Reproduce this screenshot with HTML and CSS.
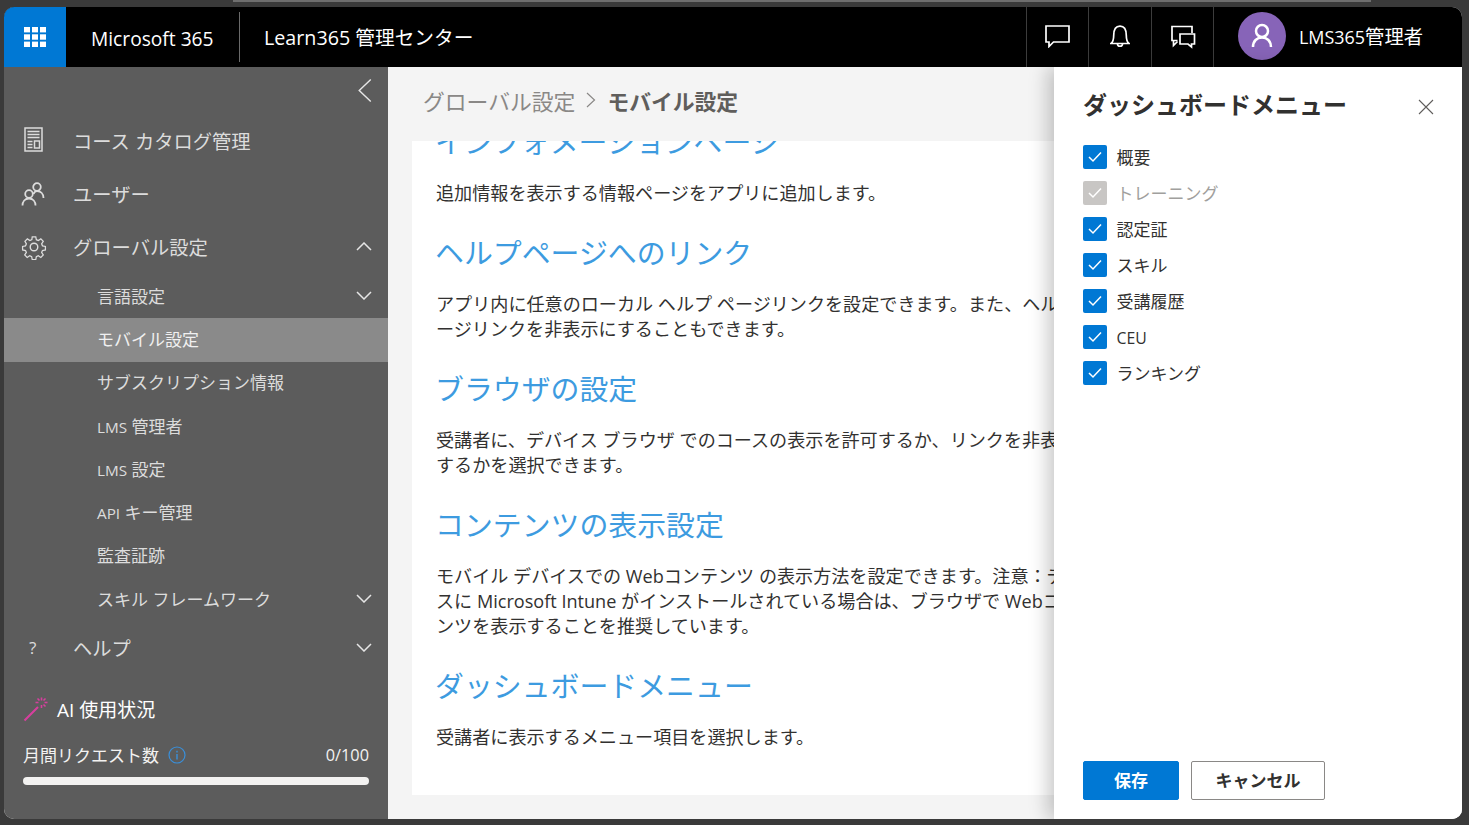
FILE: index.html
```html
<!DOCTYPE html>
<html lang="ja">
<head>
<meta charset="utf-8">
<title>Learn365 管理センター</title>
<link rel="stylesheet" href="styles.css">
</head>
<body>
<div class="topstrip"></div>
<div class="window">
  <header class="topbar">
    <div class="waffle">
      <svg width="22" height="20" viewBox="0 0 22 20" fill="#fff"><rect x="0" y="0" width="6" height="5.4"/><rect x="8" y="0" width="6" height="5.4"/><rect x="16" y="0" width="6" height="5.4"/><rect x="0" y="7.3" width="6" height="5.4"/><rect x="8" y="7.3" width="6" height="5.4"/><rect x="16" y="7.3" width="6" height="5.4"/><rect x="0" y="14.6" width="6" height="5.4"/><rect x="8" y="14.6" width="6" height="5.4"/><rect x="16" y="14.6" width="6" height="5.4"/></svg>
    </div>
    <div class="brand">Microsoft 365</div>
    <div class="app-name">Learn365 管理センター</div>
    <div class="top-actions">
      <div class="top-btn"><svg width="25" height="23" viewBox="0 0 25 23" fill="none" stroke="#fff" stroke-width="1.7"><path d="M1 1h23v16H8.500L4 21.500V17H1z"/></svg></div>
      <div class="top-btn"><svg width="20" height="23" viewBox="0 0 20 23" fill="none" stroke="#fff" stroke-width="1.7"><path d="M1 18.500c2-1.500 2.700-3.500 2.700-8C3.700 4.500 6 1.200 10 1.200s6.300 3.300 6.300 9.300c0 4.500.7 6.500 2.700 8z"/><path d="M7.500 19c0 3 5 3 5 0"/></svg></div>
      <div class="top-btn"><svg width="26" height="24" viewBox="0 0 26 24" fill="none" stroke="#fff" stroke-width="1.7"><path d="M7.500 15.500H2v-14h20V8"/><path d="M3.500 15.500v5l4-4"/><path d="M10 9h14.500v10H21.500v3L18 19h-8z"/></svg></div>
    </div>
    <div class="user">
      <div class="avatar"><svg width="22" height="26" viewBox="0 0 22 26" fill="none" stroke="#fff" stroke-width="2.500"><circle cx="11" cy="8" r="6"/><path d="M2 24c0-6 4-9.500 9-9.500s9 3.500 9 9.500"/></svg></div>
      <span class="user-name"><span class="lat">LMS365</span>管理者</span>
    </div>
  </header>

  <div class="content">
    <nav class="sidebar">
      <div class="collapse"><svg width="16" height="25" viewBox="0 0 16 26" fill="none" stroke="#e6e6e6" stroke-width="1.500"><path d="M14 1.500L2 13l12 11.500"/></svg></div>
      <div class="nav-top first"><span class="nav-icon doc"><svg width="19" height="25" viewBox="0 0 19 25" fill="none" stroke="#dcdcdc" stroke-width="1.500"><path d="M1 1h17v23H1z"/><path d="M3.500 4.500h12M3.500 7.500h12M3.500 10.500h12M3.500 14.500h5M3.500 17.500h5M3.500 20.500h5"/><path d="M10.500 14h5v7h-5z"/></svg></span>コース カタログ管理</div>
      <div class="nav-top"><span class="nav-icon"><svg width="24" height="24" viewBox="0 0 24 24" fill="none" stroke="#dcdcdc" stroke-width="1.800"><circle cx="16" cy="5" r="3.800"/><circle cx="8" cy="12" r="3.800"/><path d="M1.500 23.500c0-4 2.500-7 6.500-7s6.500 3 6.500 7"/><path d="M12.500 12c.9-2 2-3 3.500-3 3.500 0 6.500 2.500 6.500 7"/></svg></span>ユーザー</div>
      <div class="nav-top"><span class="nav-icon"><svg width="26" height="26" viewBox="0 0 24 24" fill="none" stroke="#dcdcdc" stroke-width="1.300"><circle cx="12" cy="12" r="3.500"/><path d="M10.200 1.500h3.600l.6 3 2 .9 2.600-1.700 2.500 2.500-1.700 2.600.9 2 3 .6v3.600l-3 .6-.9 2 1.700 2.600-2.500 2.500-2.600-1.700-2 .9-.6 3h-3.600l-.6-3-2-.9-2.600 1.700-2.500-2.500 1.700-2.600-.9-2-3-.6v-3.600l3-.6.9-2L2.700 6.200l2.500-2.500 2.600 1.700 2-.9z" transform="translate(1.200 1.200) scale(.9)"/></svg></span>グローバル設定<svg class="chev" width="16" height="9" viewBox="0 0 16 9" fill="none" stroke="#e6e6e6" stroke-width="1.500"><path d="M1 8l7-7 7 7"/></svg></div>
      <div class="nav-sub first-sub">言語設定<svg class="chev" width="16" height="9" viewBox="0 0 16 9" fill="none" stroke="#e6e6e6" stroke-width="1.500"><path d="M1 1l7 7 7-7"/></svg></div>
      <div class="nav-sub active">モバイル設定</div>
      <div class="nav-sub">サブスクリプション情報</div>
      <div class="nav-sub"><span><span class="lat-sm">LMS</span> 管理者</span></div>
      <div class="nav-sub"><span><span class="lat-sm">LMS</span> 設定</span></div>
      <div class="nav-sub"><span><span class="lat-sm">API</span> キー管理</span></div>
      <div class="nav-sub">監査証跡</div>
      <div class="nav-sub">スキル フレームワーク<svg class="chev" width="16" height="9" viewBox="0 0 16 9" fill="none" stroke="#e6e6e6" stroke-width="1.500"><path d="M1 1l7 7 7-7"/></svg></div>
      <div class="nav-top help"><span class="nav-icon q">?</span>ヘルプ<svg class="chev" width="16" height="9" viewBox="0 0 16 9" fill="none" stroke="#e6e6e6" stroke-width="1.500"><path d="M1 1l7 7 7-7"/></svg></div>
      <div class="ai-title"><svg width="26" height="26" viewBox="0 0 26 26" fill="none" stroke="#d63f9e"><path d="M1.500 24.500L15 11" stroke-width="2.200"/><path d="M18.500 1.500v3M18.500 9v3M12.500 6.500h3M21.500 6.500h3M14.500 2.500l2 2M22.500 2.500l-2 2M22.500 10.500l-2-2" stroke-width="1.600"/></svg><span>AI 使用状況</span></div>
      <div class="usage">
        <div class="usage-row">
          <span class="usage-label">月間リクエスト数<svg width="18" height="18" viewBox="0 0 18 18" fill="none" stroke="#3a8fd9" stroke-width="1.200"><circle cx="9" cy="9" r="8"/><path d="M9 8v5.500M9 4.800v1.600" stroke-width="1.400"/></svg></span>
          <span class="usage-num">0/100</span>
        </div>
        <div class="usage-bar"></div>
      </div>
    </nav>

    <main class="main">
      <div class="crumbs"><span class="crumb">グローバル設定</span><svg width="10" height="16" viewBox="0 0 10 16" fill="none" stroke="#8a8886" stroke-width="1.200"><path d="M1 1l7.500 7L1 15"/></svg><strong class="crumb-now">モバイル設定</strong></div>
      <div class="card">
        <section class="block top-block">
          <h2>インフォメーションページ</h2>
          <p>追加情報を表示する情報ページをアプリに追加します。</p>
        </section>
        <section class="block">
          <h2>ヘルプページへのリンク</h2>
          <p>アプリ内に任意のローカル ヘルプ ページリンクを設定できます。また、ヘルプペ<br>ージリンクを非表示にすることもできます。</p>
        </section>
        <section class="block">
          <h2>ブラウザの設定</h2>
          <p>受講者に、デバイス ブラウザ でのコースの表示を許可するか、リンクを非表示に<br>するかを選択できます。</p>
        </section>
        <section class="block">
          <h2>コンテンツの表示設定</h2>
          <p>モバイル デバイスでの Webコンテンツ の表示方法を設定できます。注意：デバイ<br>スに Microsoft Intune がインストールされている場合は、ブラウザで Webコンテ<br>ンツを表示することを推奨しています。</p>
        </section>
        <section class="block">
          <h2>ダッシュボードメニュー</h2>
          <p>受講者に表示するメニュー項目を選択します。</p>
        </section>
      </div>
    </main>

    <aside class="panel">
      <div class="panel-head">
        <h3>ダッシュボードメニュー</h3>
        <svg class="close" width="16" height="16" viewBox="0 0 16 16" fill="none" stroke="#605e5c" stroke-width="1.100"><path d="M1 1l14 14M15 1L1 15"/></svg>
      </div>
      <ul class="checks">
        <li><span class="box"><svg width="16" height="12" viewBox="0 0 16 12" fill="none" stroke="#fff" stroke-width="1.500"><path d="M2 6l4 4 8-8.500"/></svg></span>概要</li>
        <li class="off"><span class="box"><svg width="16" height="12" viewBox="0 0 16 12" fill="none" stroke="#fff" stroke-width="1.500"><path d="M2 6l4 4 8-8.500"/></svg></span>トレーニング</li>
        <li><span class="box"><svg width="16" height="12" viewBox="0 0 16 12" fill="none" stroke="#fff" stroke-width="1.500"><path d="M2 6l4 4 8-8.500"/></svg></span>認定証</li>
        <li><span class="box"><svg width="16" height="12" viewBox="0 0 16 12" fill="none" stroke="#fff" stroke-width="1.500"><path d="M2 6l4 4 8-8.500"/></svg></span>スキル</li>
        <li><span class="box"><svg width="16" height="12" viewBox="0 0 16 12" fill="none" stroke="#fff" stroke-width="1.500"><path d="M2 6l4 4 8-8.500"/></svg></span>受講履歴</li>
        <li><span class="box"><svg width="16" height="12" viewBox="0 0 16 12" fill="none" stroke="#fff" stroke-width="1.500"><path d="M2 6l4 4 8-8.500"/></svg></span><span class="lat">CEU</span></li>
        <li><span class="box"><svg width="16" height="12" viewBox="0 0 16 12" fill="none" stroke="#fff" stroke-width="1.500"><path d="M2 6l4 4 8-8.500"/></svg></span>ランキング</li>
      </ul>
      <div class="panel-foot">
        <button class="btn primary">保存</button>
        <button class="btn">キャンセル</button>
      </div>
    </aside>
  </div>
</div>
</body>
</html>
```
FILE: styles.css
```css
* { box-sizing: border-box; }
html, body { height: 100%; }
body {
  margin: 0;
  padding: 7px 7px 6px 4px;
  background: #3a3a3a;
  overflow: hidden;
  font-family: "Open Sans", "Noto Sans CJK JP", sans-serif;
  color: #323130;
}
.topstrip {
  position: absolute;
  top: 0;
  left: 233px;
  width: 1138px;
  height: 2px;
  background: #6e6e6e;
}
.window {
  height: 812px;
  display: flex;
  flex-direction: column;
  border-radius: 10px;
  overflow: hidden;
  background: #f4f4f4;
}
.lat { font-size: .93em; }
.lat-sm { font-size: .9em; }
.topbar {
  height: 60px;
  flex: none;
  display: flex;
  align-items: center;
  background: #000;
  color: #fff;
}
.waffle {
  width: 62px;
  height: 60px;
  background: #0078d4;
  display: flex;
  align-items: center;
  justify-content: center;
}
.brand {
  width: 174px;
  height: 50px;
  line-height: 53px;
  padding-left: 25px;
  font-size: 19.200px;
  border-right: 1px solid #6a6a6a;
}
.app-name {
  padding-left: 24px;
  padding-bottom: 1px;
  font-size: 19.700px;
  flex: 1;
}
.top-actions { display: flex; height: 60px; }
.top-btn {
  width: 62.500px;
  display: flex;
  align-items: center;
  justify-content: center;
  border-left: 1px solid #3c3c3c;
  padding: 0 0 1px 1px;
}
.user {
  width: 249px;
  height: 60px;
  display: flex;
  align-items: center;
  padding-left: 24px;
  padding-bottom: 3px;
  border-left: 1px solid #3c3c3c;
  font-size: 19.300px;
}
.avatar {
  width: 48px;
  height: 48px;
  border-radius: 50%;
  background: #8764b8;
  display: flex;
  align-items: center;
  justify-content: center;
  margin-right: 13px;
}
.content {
  flex: 1;
  min-height: 0;
  display: flex;
  position: relative;
}
.sidebar {
  width: 384px;
  flex: none;
  background: #5c5c5c;
  color: #dcdcdc;
  display: flex;
  flex-direction: column;
}
.collapse {
  height: 46px;
  flex: none;
  display: flex;
  align-items: flex-start;
  justify-content: flex-end;
  padding: 11px 15px 0 0;
}
.nav-top {
  height: 53px;
  display: flex;
  align-items: center;
  font-size: 19.300px;
  padding: 0 16px 2px 0;
}
.nav-top.first { margin-top: 2px; }
.nav-icon {
  width: 69px;
  flex: none;
  padding-left: 17px;
  display: flex;
  align-items: center;
}
.nav-icon.doc { padding-left: 20px; padding-bottom: 2px; }
.nav-icon.q { padding-left: 25px; font-size: 17px; }
.chev { margin-left: auto; }
.nav-sub {
  height: 43.300px;
  display: flex;
  align-items: center;
  font-size: 17px;
  padding: 0 16px 3px 93px;
}
.first-sub { margin-top: 1px; }
.nav-sub.active { background: #8a8a8a; color: #f0f0f0; }
.help { margin-top: 1px; }
.ai-title {
  display: flex;
  align-items: center;
  gap: 8px;
  color: #fff;
  font-size: 19px;
  padding: 0 19px;
  margin-top: 20px;
}
.usage { padding: 0 19px; margin-top: 19px; color: #f3f2f1; font-size: 17px; }
.usage-row { display: flex; justify-content: space-between; align-items: center; }
.usage-label { display: flex; align-items: center; gap: 9px; }
.usage-num { font-size: 16.300px; }
.usage-bar {
  height: 8px;
  margin-top: 10px;
  border-radius: 4px;
  background: #f3f2f1;
}
.main {
  flex: 1;
  min-width: 0;
  display: flex;
  flex-direction: column;
  background: #f4f4f4;
  padding: 0 0 24px 24px;
}
.crumbs {
  height: 74px;
  flex: none;
  display: flex;
  align-items: center;
  padding: 0 0 8px 11px;
  gap: 11px;
  font-size: 21.800px;
}
.crumb { color: #8a8886; }
.crumb-now { color: #605e5c; font-weight: 700; }
.card {
  flex: 1;
  min-height: 0;
  background: #fff;
  padding: 0 24px;
  overflow: hidden;
  white-space: nowrap;
}
.block h2 {
  margin: 0 0 0 -1px;
  font-size: 28.900px;
  font-weight: 400;
  line-height: 44px;
  color: #3d9be0;
}
.block p {
  margin: 16.500px 0 25.500px;
  font-size: 18.100px;
  line-height: 25px;
  color: #323130;
}
.top-block { margin-top: -21px; }
.panel {
  position: absolute;
  top: 0;
  right: 0;
  bottom: 0;
  width: 408px;
  background: #fff;
  box-shadow: -6px 0 18px rgba(0, 0, 0, .22);
  display: flex;
  flex-direction: column;
  padding: 0 29px 19px;
}
.panel-head {
  height: 72px;
  display: flex;
  align-items: center;
  justify-content: space-between;
  flex: none;
}
.panel-head h3 {
  margin: 0;
  font-size: 24px;
  font-weight: 700;
  color: #323130;
}
.close { margin-right: -1px; margin-top: 8px; }
.checks {
  list-style: none;
  margin: 0;
  padding: 0;
}
.checks li {
  height: 36px;
  display: flex;
  align-items: center;
  font-size: 17px;
  line-height: 22px;
  padding-top: 1px;
  color: #323130;
}
.box {
  width: 24px;
  height: 24px;
  flex: none;
  margin: -1px 9.500px 0 0;
  border-radius: 2px;
  background: #0078d4;
  display: flex;
  align-items: center;
  justify-content: center;
}
.checks .off { color: #a19f9d; }
.off .box { background: #c8c6c4; }
.panel-foot {
  margin-top: auto;
  display: flex;
  gap: 12px;
}
.btn {
  height: 39px;
  width: 134px;
  padding: 0 0 2px;
  border: 1px solid #8a8886;
  border-radius: 2px;
  background: #fff;
  color: #323130;
  font: 700 17px "Open Sans", "Noto Sans CJK JP", sans-serif;
}
.btn.primary {
  width: 96px;
  background: #0078d4;
  border-color: #0078d4;
  color: #fff;
}
```
